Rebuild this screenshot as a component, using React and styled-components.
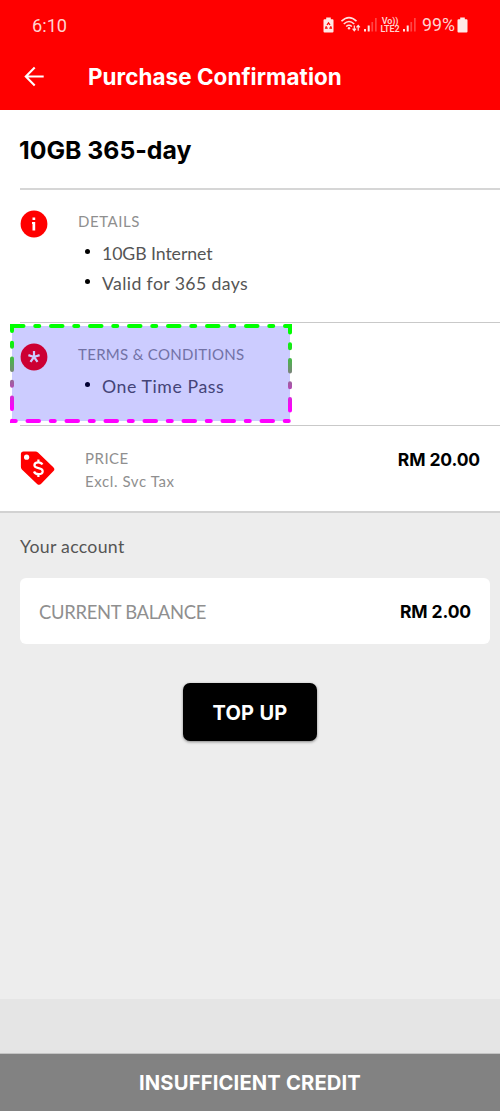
import React from "react";
import styled, { createGlobalStyle } from "styled-components";

const GlobalStyle = createGlobalStyle`
  * { box-sizing: border-box; }
  body { margin: 0; background: #ededed; }
  h1, h2, p, ul { margin: 0; padding: 0; }
`;

const bold = `font-family: Inter, "Liberation Sans", sans-serif; font-weight: 700;`;
const regular = `font-family: Lato, "Liberation Sans", sans-serif; font-weight: 400;`;

const Screen = styled.div`
  width: 500px;
  height: 1111px;
  display: flex;
  flex-direction: column;
  background: #ededed;
  overflow: hidden;
`;

const Header = styled.header`
  height: 110px;
  background: #ff0000;
  flex: none;
`;

const StatusBar = styled.div`
  height: 50px;
  padding: 0 32px 0 32px;
  display: flex;
  align-items: center;
  justify-content: space-between;
  color: #ffd3d0;
  font-family: Roboto, sans-serif;
  font-weight: 400;
  font-size: 18.2px;
`;

const StatusIcons = styled.div`
  display: flex;
  align-items: center;
  padding-bottom: 1px;
`;

const Battery = styled.span`
  font-size: 17.8px;
  line-height: 20px;
  padding-top: 1px;
  letter-spacing: 0;
  margin: 0 2px 0 5px;
`;

const Network = styled.span`
  display: flex;
  flex-direction: column;
  align-items: center;
  width: 20px;
  margin: 0 3px 0 2px;
  font-size: 9px;
  line-height: 8px;
  font-weight: 600;
  letter-spacing: -0.1px;
  white-space: nowrap;
`;

const TitleBar = styled.div`
  height: 53px;
  padding-left: 24px;
  display: flex;
  align-items: center;
  gap: 43px;
`;

const ScreenTitle = styled.h1`
  ${bold}
  font-size: 22.4px;
  letter-spacing: 0.07px;
  color: #fff;
  white-space: nowrap;
`;

const Content = styled.main`
  flex: none;
  background: #fff;
  border-bottom: 2px solid #d2d2d2;
`;

const PlanName = styled.h2`
  ${bold}
  height: 80px;
  margin-left: 20px;
  padding-top: 25px;
  line-height: 30px;
  font-size: 24.8px;
  text-indent: -1px;
  color: #000;
  border-bottom: 2px solid #d6d6d6;
`;

const Section = styled.section`
  position: relative;
  display: flex;
  height: ${(p) => p.$height}px;
  margin-left: 20px;
  padding-top: ${(p) => p.$top}px;
  border-bottom: 1px solid ${(p) => (p.$last ? "transparent" : "#c9c9c9")};
`;

const IconSlot = styled.div`
  width: ${(p) => p.$width}px;
  padding-top: ${(p) => p.$top || 0}px;
  flex: none;
  svg { display: block; }
`;

const Body = styled.div`
  flex: 1;
`;

const Caption = styled.p`
  ${regular}
  font-size: 15px;
  line-height: 23px;
  letter-spacing: ${(p) => p.$spacing}px;
  color: #8f8f8f;
`;

const Bullets = styled.ul`
  list-style: none;
  padding: 5px 0 0 7px;
`;

const Bullet = styled.li`
  ${regular}
  display: flex;
  align-items: center;
  height: 30px;
  gap: 12px;
  font-size: 17.7px;
  letter-spacing: ${(p) => p.$spacing}px;
  color: #555;
  &::before {
    content: "";
    width: 5px;
    height: 5px;
    margin-top: -3px;
    border-radius: 50%;
    background: #000;
  }
`;

const Amount = styled.span`
  ${bold}
  font-size: 17.5px;
  line-height: 24px;
  letter-spacing: -0.13px;
  color: #000;
`;

const PriceAmount = styled(Amount)`
  margin: 1px 20px 0 0;
`;

const Highlight = styled.svg`
  position: absolute;
  left: -10px;
  top: 1px;
  pointer-events: none;
`;

const Account = styled.section`
  flex: 1;
  display: flex;
  flex-direction: column;
  padding: 21px 10px 0 20px;
`;

const AccountLabel = styled.p`
  ${regular}
  font-size: 17.7px;
  line-height: 26px;
  letter-spacing: 0.3px;
  color: #555;
`;

const BalanceCard = styled.div`
  display: flex;
  align-items: center;
  justify-content: space-between;
  height: 66px;
  margin-top: 18px;
  padding: 2px 19px 0;
  border-radius: 6px;
  background: #fff;
`;

const BalanceLabel = styled.span`
  ${regular}
  font-size: 18.4px;
  letter-spacing: -0.3px;
  color: #8f8f8f;
`;

const TopUpButton = styled.button`
  ${bold}
  width: 134px;
  height: 58px;
  margin: 39px 0 0 163px;
  padding: 2px 0 0;
  border: 0;
  border-radius: 7px;
  background: #000;
  color: #fff;
  font-size: 20px;
  letter-spacing: 0.3px;
  box-shadow: 0 1px 3px rgba(0, 0, 0, 0.45);
`;

const BottomSpacer = styled.div`
  height: 55px;
  flex: none;
  background: #e5e5e5;
  border-bottom: 1px solid #c4c4c4;
`;

const Footer = styled.footer`
  ${bold}
  flex: none;
  height: 57px;
  display: flex;
  align-items: center;
  justify-content: center;
  background: #828282;
  color: #fff;
  font-size: 20.2px;
  letter-spacing: 0.15px;
`;

const BatteryShape = ({ recycle }) => (
  <svg width="11" height="16" viewBox="0 0 11 16">
    <path d="M3.2 0.5h4.6v1.7h1.7a1 1 0 0 1 1 1v11.3a1 1 0 0 1-1 1h-8a1 1 0 0 1-1-1V3.2a1 1 0 0 1 1-1h1.7z" fill="#ffe9e7" />
    {recycle && (
      <path
        d="M4 8 5.5 5.8 7 8M7.600 9.200 8.300 11.200H6.300M4.700 11.200H2.700L3.400 9.200"
        fill="none"
        stroke="#f00"
        strokeWidth="1.3"
      />
    )}
  </svg>
);

const WifiSvg = styled.svg`
  margin: 0 2px 0 7px;
`;

const Wifi = () => (
  <WifiSvg width="21" height="17" viewBox="0 0 21 17" fill="none" stroke="#ffe0de" strokeWidth="1.6">
    <path d="M0.5 5.2Q8-2 15.5 5.2M2.8 8Q8 3 13.2 8M5.2 10.5Q8 8 10.8 10.5" />
    <circle cx="8" cy="12.2" r="1.2" fill="#ffe0de" stroke="none" />
    <path d="M13.3 9.5v5M11.6 12.7l1.7 2 1.7-2M17.2 14.8v-5M15.5 11.4l1.7-2 1.7 2" strokeWidth="1.2" />
  </WifiSvg>
);

const Signal = () => (
  <svg width="14" height="15" viewBox="0 0 14 15" fill="#ffe5e3">
    <rect x="0" y="12" width="2" height="2.5" />
    <rect x="3.7" y="8.5" width="2" height="6" />
    <rect x="7.4" y="5" width="1.7" height="9.5" opacity="0.3" />
    <rect x="11" y="1" width="1.7" height="13.5" opacity="0.3" />
  </svg>
);

const BackArrow = () => (
  <svg width="21" height="21" viewBox="0 0 21 21" fill="none" stroke="#fff" strokeWidth="2.1">
    <path d="M19.7 10.5H2M10.7 1.5 1.8 10.5l8.9 9" />
  </svg>
);

const InfoIcon = () => (
  <svg width="28" height="28" viewBox="0 0 28 28">
    <circle cx="14" cy="14" r="13.4" fill="#f00" />
    <path d="M12.5 7.5h2.7v2.6h-2.7zM12 12h3.2v8.5h-2.7v-6.6H12z" fill="#fff" />
  </svg>
);

const AsteriskIcon = () => (
  <svg width="28" height="28" viewBox="0 0 28 28">
    <circle cx="14" cy="14" r="13.4" fill="#f00" />
    <path d="M14 14V8M14 14l5.6-1.9M14 14l3.5 4.9M14 14l-3.5 4.9M14 14l-5.6-1.9" stroke="#fff" strokeWidth="2.2" fill="none" />
  </svg>
);

const PriceTagIcon = () => (
  <svg width="35" height="35" viewBox="0 0 35 35">
    <path d="M3.5 0.5H15.5c1 0 1.8.3 2.5.9L33.3 16.2c1.4 1.3 1.4 2.7.2 3.9L21.2 32.8c-1.3 1.4-2.8 1.4-4.1.1L1.9 18.4C1.2 17.7.9 17 .9 16V3.1C.9 1.5 1.9.5 3.5.5z" fill="#f00" />
    <circle cx="6.6" cy="6.2" r="2.6" fill="#fff" />
    <path d="M22.4 13.5c-.8-1.5-2.2-2.2-4.1-2.2-2.3 0-3.9 1.1-3.9 2.9 0 4.1 8.3 1.8 8.3 6 0 1.9-1.7 3-4.1 3-2.2 0-3.9-.9-4.6-2.7M18.4 8.5v3M18.4 23v3" fill="none" stroke="#fff" strokeWidth="2.2" />
  </svg>
);

const DashedHighlight = () => (
  <Highlight width="284" height="101" viewBox="0 0 284 101">
    <defs>
      <linearGradient id="outline" gradientUnits="userSpaceOnUse" x1="0" y1="16" x2="0" y2="84">
        <stop offset="0" stopColor="#0f0" />
        <stop offset="1" stopColor="#f0f" />
      </linearGradient>
    </defs>
    <rect x="2" y="2" width="278" height="95" fill="rgba(0,0,255,0.2)" />
    <rect x="2" y="2" width="278" height="95" fill="none" stroke="url(#outline)" strokeWidth="4" strokeLinecap="round" strokeDasharray="11.5 11.75 4 11.75" />
  </Highlight>
);

export default function App() {
  return (
    <>
      <GlobalStyle />
      <Screen>
        <Header>
          <StatusBar>
            <span>6:10</span>
            <StatusIcons>
              <BatteryShape recycle />
              <Wifi />
              <Signal />
              <Network>
                <span>Vo))</span>
                <span>LTE2</span>
              </Network>
              <Signal />
              <Battery>99%</Battery>
              <BatteryShape />
            </StatusIcons>
          </StatusBar>
          <TitleBar>
            <BackArrow />
            <ScreenTitle>Purchase Confirmation</ScreenTitle>
          </TitleBar>
        </Header>

        <Content>
          <PlanName>10GB 365-day</PlanName>
          <Section $height={133} $top={20}>
            <IconSlot $width={58}><InfoIcon /></IconSlot>
            <Body>
              <Caption $spacing={0.55}>DETAILS</Caption>
              <Bullets>
                <Bullet $spacing={-0.08}>10GB Internet</Bullet>
                <Bullet $spacing={0.38}>Valid for 365 days</Bullet>
              </Bullets>
            </Body>
          </Section>
          <Section $height={103} $top={20}>
            <IconSlot $width={58}><AsteriskIcon /></IconSlot>
            <Body>
              <Caption $spacing={0.31}>TERMS &amp; CONDITIONS</Caption>
              <Bullets>
                <Bullet $spacing={0.58}>One Time Pass</Bullet>
              </Bullets>
            </Body>
            <DashedHighlight />
          </Section>
          <Section $height={85} $top={21} $last>
            <IconSlot $width={65} $top={4}><PriceTagIcon /></IconSlot>
            <Body>
              <Caption $spacing={0.5}>PRICE</Caption>
              <Caption $spacing={0.6}>Excl. Svc Tax</Caption>
            </Body>
            <PriceAmount>RM 20.00</PriceAmount>
          </Section>
        </Content>

        <Account>
          <AccountLabel>Your account</AccountLabel>
          <BalanceCard>
            <BalanceLabel>CURRENT BALANCE</BalanceLabel>
            <Amount>RM 2.00</Amount>
          </BalanceCard>
          <TopUpButton>TOP UP</TopUpButton>
        </Account>
        <BottomSpacer />
        <Footer>INSUFFICIENT CREDIT</Footer>
      </Screen>
    </>
  );
}
